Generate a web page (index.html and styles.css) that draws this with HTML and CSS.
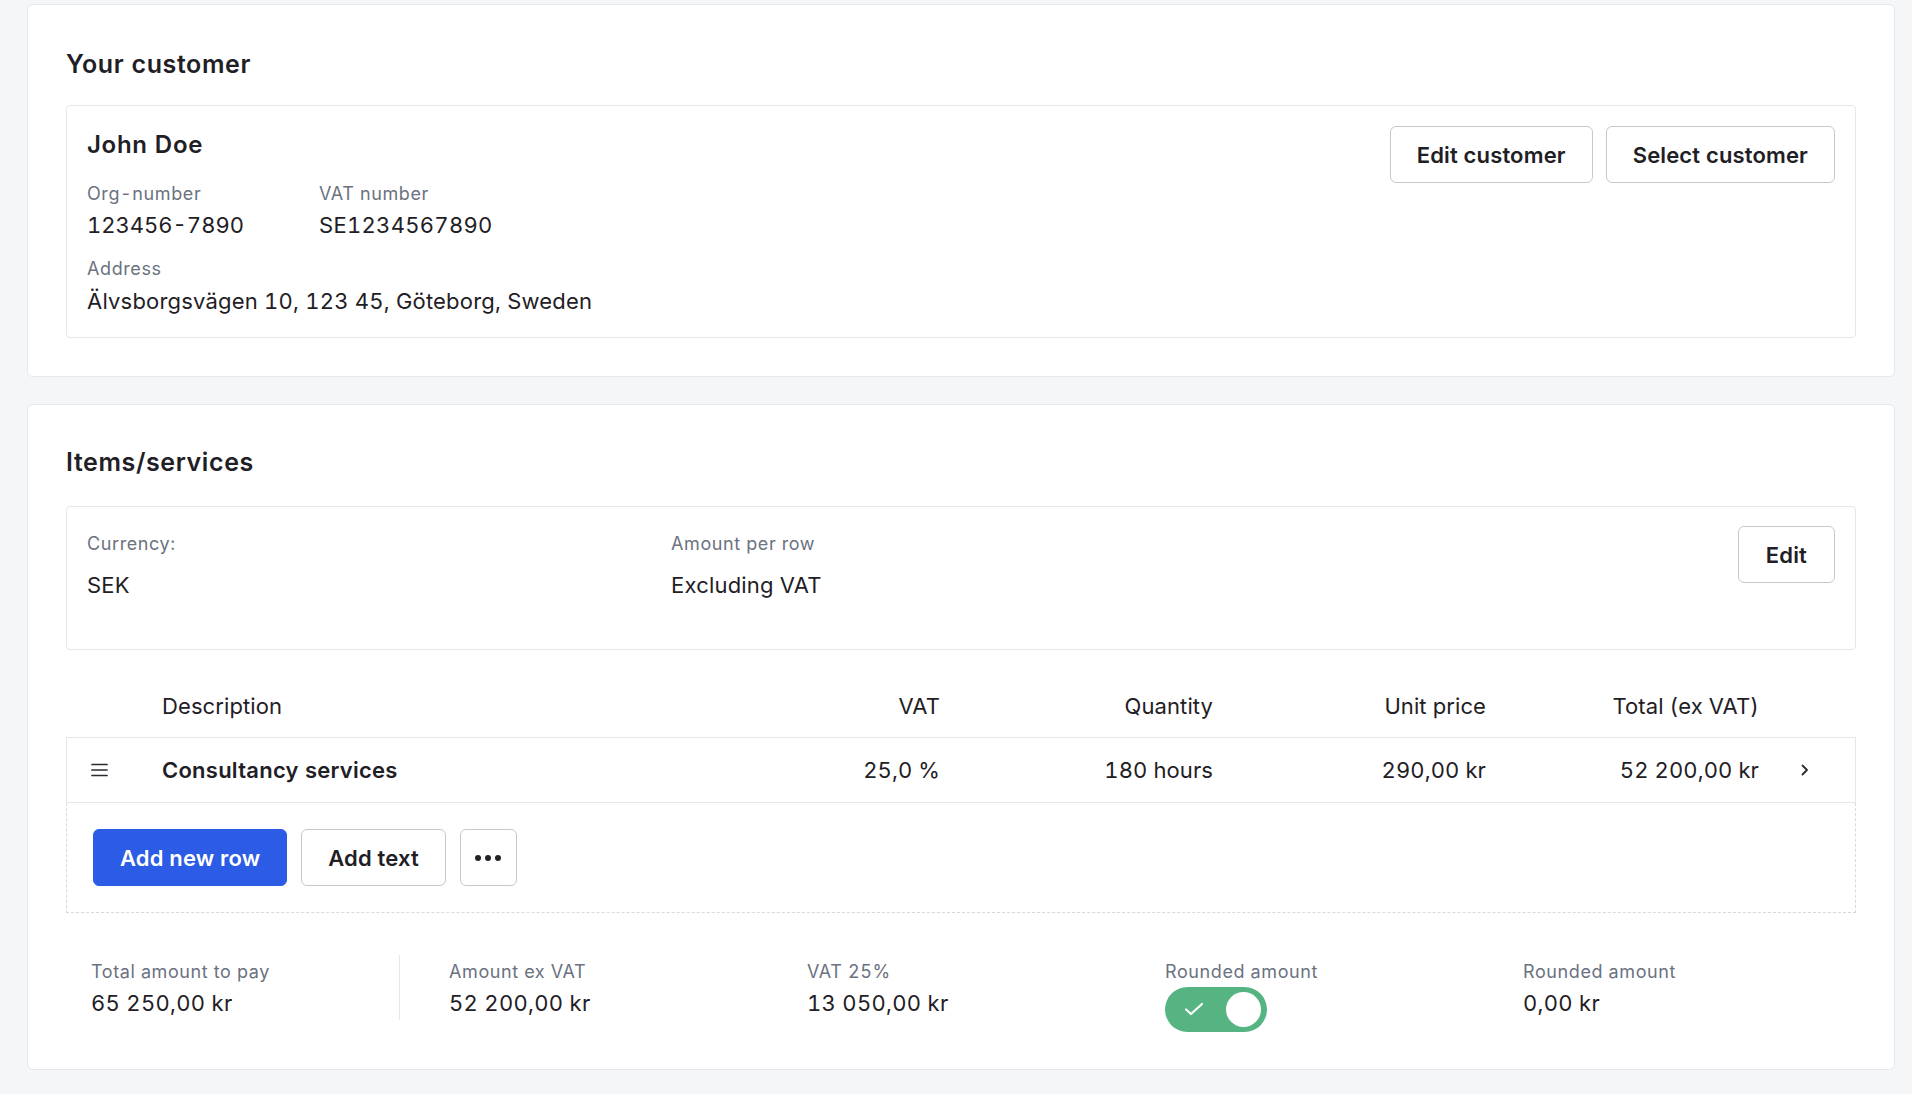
FILE: index.html
```html
<!DOCTYPE html>
<html lang="en">
<head>
<meta charset="utf-8">
<title>Invoice</title>
<link rel="stylesheet" href="styles.css">
</head>
<body>
<div class="page">
  <section class="card card-customer">
    <h2 class="card-title">Your customer</h2>
    <div class="box customer-box">
      <div class="customer-info">
        <div class="customer-name">John Doe</div>
        <div class="field-row">
          <div class="field field-org">
            <div class="label">Org-number</div>
            <div class="value value-num value-org">123456-7890</div>
          </div>
          <div class="field">
            <div class="label">VAT number</div>
            <div class="value value-num">SE1234567890</div>
          </div>
        </div>
        <div class="field field-address">
          <div class="label">Address</div>
          <div class="value">Älvsborgsvägen 10, 123 45, Göteborg, Sweden</div>
        </div>
      </div>
      <div class="btn-group">
        <button class="btn">Edit customer</button>
        <button class="btn">Select customer</button>
      </div>
    </div>
  </section>

  <section class="card card-items">
    <h2 class="card-title">Items/services</h2>
    <div class="box settings-box">
      <div class="setting setting-currency">
        <div class="label">Currency:</div>
        <div class="value">SEK</div>
      </div>
      <div class="setting">
        <div class="label">Amount per row</div>
        <div class="value">Excluding VAT</div>
      </div>
      <button class="btn btn-edit">Edit</button>
    </div>

    <div class="table">
      <div class="trow thead">
        <div></div>
        <div class="cell">Description</div>
        <div class="cell num">VAT</div>
        <div class="cell num">Quantity</div>
        <div class="cell num">Unit price</div>
        <div class="cell num">Total (ex VAT)</div>
        <div></div>
      </div>
      <div class="trow tbody">
        <div class="handle">
          <svg width="17" height="14" viewBox="0 0 17 14" aria-hidden="true">
            <path d="M1 1.5H16M1 7H16M1 12.5H16" stroke="#2a2b30" stroke-width="1.7" stroke-linecap="round"/>
          </svg>
        </div>
        <div class="cell item-name">Consultancy services</div>
        <div class="cell num">25,0 %</div>
        <div class="cell num">180 hours</div>
        <div class="cell num">290,00 kr</div>
        <div class="cell num">52 200,00 kr</div>
        <div class="chev">
          <svg width="8" height="12" viewBox="0 0 8 12" aria-hidden="true">
            <path d="M1.5 1.5L6 6L1.5 10.5" fill="none" stroke="#2a2b30" stroke-width="1.8" stroke-linecap="round" stroke-linejoin="round"/>
          </svg>
        </div>
      </div>
      <div class="actions">
        <button class="btn btn-primary">Add new row</button>
        <button class="btn">Add text</button>
        <button class="btn btn-more" aria-label="More">
          <svg width="26" height="6" viewBox="0 0 26 6" aria-hidden="true">
            <circle cx="3" cy="3" r="3" fill="#222329"/>
            <circle cx="13" cy="3" r="3" fill="#222329"/>
            <circle cx="23" cy="3" r="3" fill="#222329"/>
          </svg>
        </button>
      </div>
    </div>

    <div class="summary">
      <div class="sum-col sum-first">
        <div class="label">Total amount to pay</div>
        <div class="value value-num">65 250,00 kr</div>
      </div>
      <div class="sum-col">
        <div class="label">Amount ex VAT</div>
        <div class="value value-num">52 200,00 kr</div>
      </div>
      <div class="sum-col">
        <div class="label">VAT 25%</div>
        <div class="value value-num">13 050,00 kr</div>
      </div>
      <div class="sum-col">
        <div class="label">Rounded amount</div>
        <div class="toggle" role="switch" aria-checked="true">
          <svg class="toggle-check" width="20" height="14" viewBox="0 0 20 14" aria-hidden="true">
            <path d="M2 7.5L7 12L18 2" fill="none" stroke="#ffffff" stroke-width="2.2" stroke-linecap="round" stroke-linejoin="round"/>
          </svg>
          <span class="toggle-knob"></span>
        </div>
      </div>
      <div class="sum-col">
        <div class="label">Rounded amount</div>
        <div class="value value-num">0,00 kr</div>
      </div>
    </div>
  </section>
</div>
</body>
</html>
```

FILE: styles.css
```css
* { box-sizing: border-box; }

html, body {
  margin: 0;
  padding: 0;
  background: #f5f6f8;
}

body {
  font-family: Inter, "Noto Sans", "Liberation Sans", sans-serif;
  color: #1f2025;
  font-variant-numeric: tabular-nums;
}

.page {
  padding: 4px 17px 25px 27px;
  display: flex;
  flex-direction: column;
  gap: 27px;
}

.card {
  width: 1868px;
  background: #ffffff;
  border: 1px solid #e4e7eb;
  border-radius: 6px;
  padding: 41px 38px 37px 38px;
}

.card-customer { padding-top: 43px; padding-bottom: 38px; }

.card-title {
  margin: 0 0 28px 0;
  font-size: 25px;
  line-height: 32px;
  font-weight: 600;
  letter-spacing: 0.6px;
  color: #1f2025;
}

.card-customer .card-title { margin-bottom: 25px; }

.box {
  border: 1px solid #e5e7eb;
  border-radius: 4px;
  padding: 20px;
}

.label {
  font-size: 18px;
  line-height: 24px;
  letter-spacing: 0.6px;
  color: #6b7280;
}

.value {
  font-size: 22px;
  line-height: 28px;
  letter-spacing: 0.2px;
  color: #1f2025;
}

.value-num { letter-spacing: 0.3px; }
.value-org { letter-spacing: 0; }

/* customer */
.customer-box {
  display: flex;
  justify-content: space-between;
  align-items: flex-start;
  padding-bottom: 22px;
}

.customer-name {
  margin-top: 3px;
  font-size: 24px;
  line-height: 32px;
  font-weight: 600;
  letter-spacing: 0.7px;
}

.field-row {
  display: flex;
  margin-top: 21px;
}

.field .value { margin-top: 5px; }

.field-org { width: 232px; }

.field-address { margin-top: 18px; }
.field-address .value { margin-top: 6px; }

.btn-group {
  display: flex;
  gap: 13px;
}

.btn {
  height: 57px;
  padding: 0 26px;
  background: #ffffff;
  border: 1px solid #c5c9cf;
  border-radius: 6px;
  font-family: inherit;
  font-size: 22px;
  font-weight: 600;
  letter-spacing: 0.15px;
  color: #1f2025;
  cursor: pointer;
}

.btn-primary {
  background: #2c5be6;
  border-color: #2c5be6;
  color: #ffffff;
}

.btn-more {
  width: 57px;
  padding: 0;
  display: flex;
  align-items: center;
  justify-content: center;
}

/* settings */
.settings-box {
  display: flex;
  align-items: flex-start;
  padding: 19px 20px 50px 20px;
}

.setting { padding-top: 6px; }
.setting .value { margin-top: 15px; }
.setting-currency { width: 584px; }

.btn-edit { margin-left: auto; padding: 0 27px; }

/* table */
.trow {
  display: grid;
  grid-template-columns: 95px 505px 273px 273px 273px 273px 96px;
  align-items: center;
  border-left: 1px solid transparent;
  border-right: 1px solid transparent;
}

.cell {
  font-size: 22px;
  line-height: 28px;
  letter-spacing: 0.1px;
}

.num { text-align: right; }

.thead {
  padding: 42px 0 17px 0;
}

.tbody {
  height: 66px;
  border: 1px solid #e5e7eb;
}

.handle {
  padding-left: 24px;
  display: flex;
  align-items: center;
}

.item-name { font-weight: 600; letter-spacing: 0.25px; }

.chev {
  padding-left: 42px;
  display: flex;
  align-items: center;
}

.actions {
  display: flex;
  gap: 14px;
  padding: 26px 26px 26px 26px;
  border-left: 1px dashed #d7d9dd;
  border-right: 1px dashed #d7d9dd;
  border-bottom: 1px dashed #d7d9dd;
}

/* summary */
.summary {
  margin-top: 42px;
  display: grid;
  grid-template-columns: repeat(5, 358px);
  align-items: start;
}

.sum-col {
  padding: 5px 0 0 25px;
}

.sum-col .value { margin-top: 5px; }

.sum-first {
  margin-right: 24px;
  padding-bottom: 3px;
  border-right: 1px solid #e5e7eb;
}

.toggle {
  position: relative;
  margin-top: 3px;
  width: 102px;
  height: 45px;
  border-radius: 23px;
  background: #55b482;
}

.toggle-check {
  position: absolute;
  left: 19px;
  top: 15px;
}

.toggle-knob {
  position: absolute;
  right: 6px;
  top: 5px;
  width: 35px;
  height: 35px;
  border-radius: 50%;
  background: #ffffff;
}
```
